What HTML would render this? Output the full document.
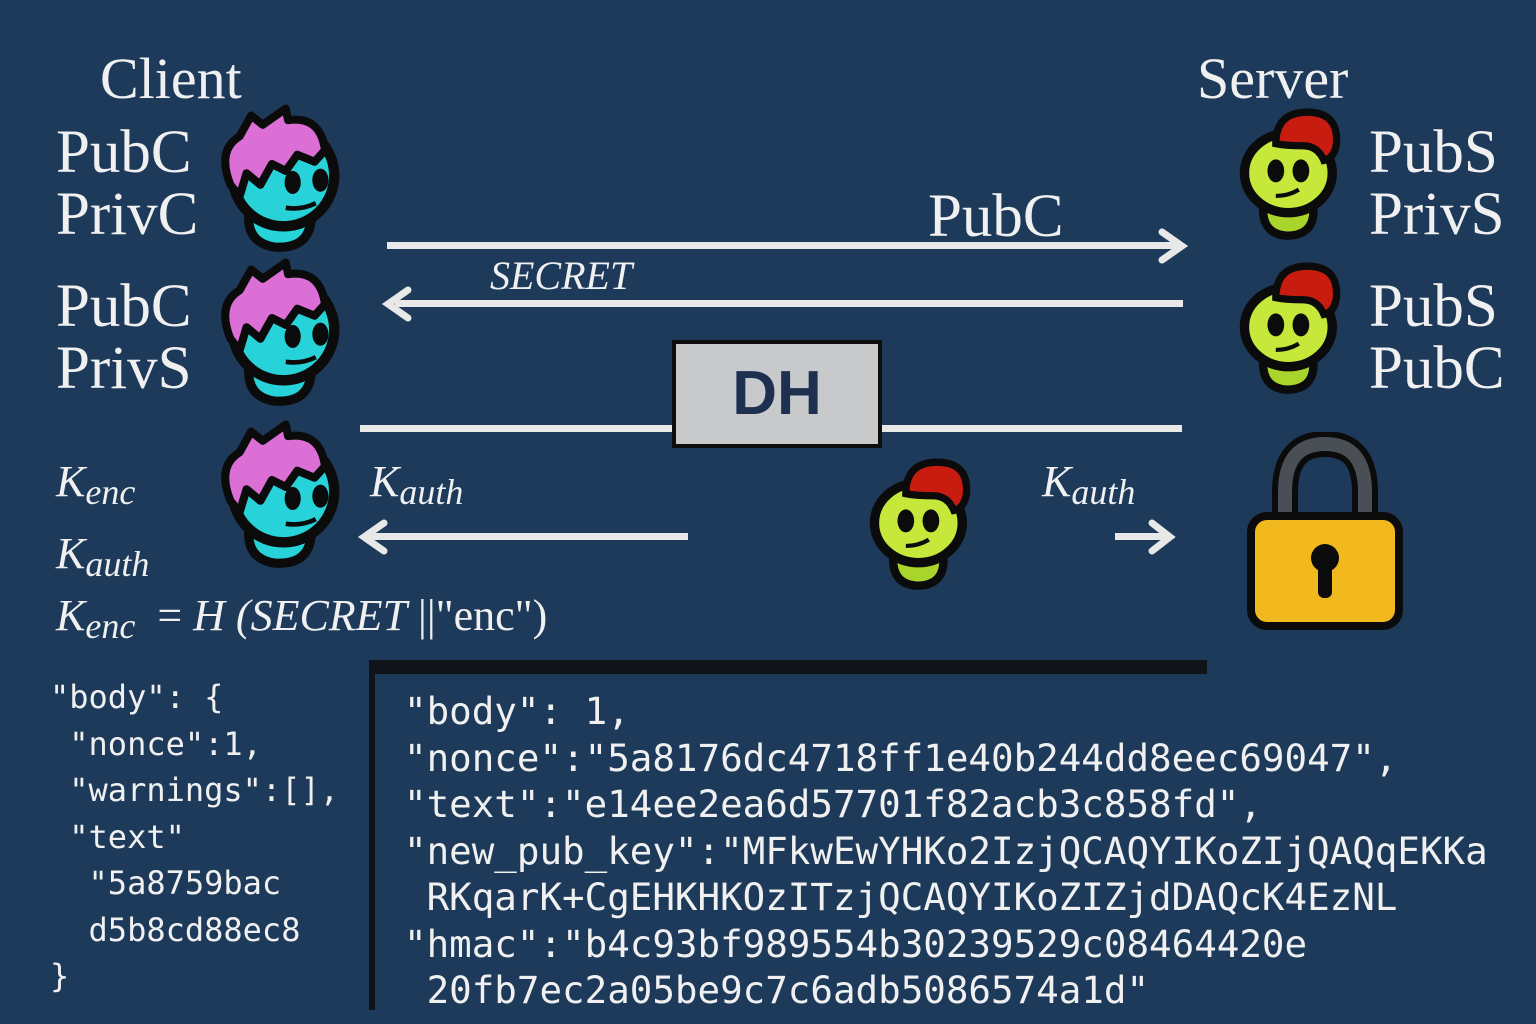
<!DOCTYPE html>
<html><head><meta charset="utf-8"><style>
body{margin:0;width:1536px;height:1024px;overflow:hidden;background:#1d3a5b;position:relative;font-family:"Liberation Serif",serif;color:#f0f0f0}
.t{position:absolute;white-space:nowrap;line-height:1}
.s{font-size:61px}
.m{font-family:"DejaVu Sans Mono","Liberation Mono",monospace}
.ar{position:absolute;height:7px;background:#e8e8e8}
.sub{font-size:36px;position:relative;top:8px}
</style></head><body>
<svg width="0" height="0" style="position:absolute">
<defs>
<g id="cl">
<path d="M38 95 Q36 120 60 124 Q90 126 92 100 Q88 84 65 84 Q40 84 38 95Z" fill="#27d3d8" stroke="#0b0b0b" stroke-width="8"/>
<circle cx="68" cy="62" r="44" fill="#27d3d8" stroke="#0b0b0b" stroke-width="9"/>
<path d="M22 70 Q10 40 30 28 L40 10 L50 18 L70 4 L72 14 Q100 10 104 40 L95 50 L80 44 L70 58 L58 52 L48 70 L36 60 L30 80Z" fill="#dc6fd6" stroke="#0b0b0b" stroke-width="7" stroke-linejoin="round"/>
<ellipse cx="76" cy="68" rx="7" ry="10" fill="#0b0b0b"/><ellipse cx="100" cy="66" rx="7" ry="10" fill="#0b0b0b"/>
<path d="M70 90 Q84 92 96 86" stroke="#0b0b0b" stroke-width="4" fill="none"/>
</g>
<g id="sv">
<path d="M28 95 Q26 122 50 124 Q76 124 76 100 Q74 86 52 86 Q30 86 28 95Z" fill="#a8d42c" stroke="#0b0b0b" stroke-width="8"/>
<ellipse cx="52" cy="64" rx="42" ry="38" fill="#c6e83a" stroke="#0b0b0b" stroke-width="9"/>
<path d="M40 36 Q40 4 74 6 Q100 8 98 36 Q96 50 86 52 Q80 38 66 38 Q50 38 40 36Z" fill="#c91c10" stroke="#0b0b0b" stroke-width="7"/>
<ellipse cx="40" cy="62" rx="8" ry="11" fill="#0b0b0b"/><ellipse cx="64" cy="62" rx="8" ry="11" fill="#0b0b0b"/>
<path d="M40 86 Q52 86 62 80" stroke="#0b0b0b" stroke-width="4" fill="none"/>
</g>
</defs></svg>

<div class="t" style="left:100px;top:50px;font-size:58px">Client</div>
<div class="t" style="left:1197px;top:50px;font-size:58px">Server</div>
<div class="t s" style="left:56px;top:122px">PubC</div>
<div class="t s" style="left:56px;top:184px">PrivC</div>
<div class="t s" style="left:56px;top:276px">PubC</div>
<div class="t s" style="left:56px;top:338px">PrivS</div>
<div class="t s" style="left:1369px;top:122px">PubS</div>
<div class="t s" style="left:1369px;top:184px">PrivS</div>
<div class="t s" style="left:1369px;top:276px">PubS</div>
<div class="t s" style="left:1369px;top:338px">PubC</div>

<svg style="position:absolute;left:205px;top:104px" width="150" height="150" viewBox="0 0 130 130"><use href="#cl"/></svg>
<svg style="position:absolute;left:205px;top:258px" width="150" height="150" viewBox="0 0 130 130"><use href="#cl"/></svg>
<svg style="position:absolute;left:205px;top:420px" width="150" height="150" viewBox="0 0 130 130"><use href="#cl"/></svg>
<svg style="position:absolute;left:1234px;top:106px" width="115" height="136" viewBox="0 0 110 130"><use href="#sv"/></svg>
<svg style="position:absolute;left:1234px;top:260px" width="115" height="136" viewBox="0 0 110 130"><use href="#sv"/></svg>
<svg style="position:absolute;left:864px;top:456px" width="115" height="136" viewBox="0 0 110 130"><use href="#sv"/></svg>

<div class="t s" style="left:928px;top:186px">PubC</div>
<div class="ar" style="left:387px;top:242px;width:790px"></div>
<svg style="position:absolute;left:1150px;top:226px" width="40" height="40"><path d="M12 6 L32 20 L12 34" stroke="#e8e8e8" stroke-width="7" fill="none" stroke-linecap="round"/></svg>
<div class="t" style="left:490px;top:256px;font-size:40px;font-style:italic">SECRET</div>
<div class="ar" style="left:395px;top:300px;width:788px"></div>
<svg style="position:absolute;left:380px;top:284px" width="40" height="40"><path d="M28 6 L8 20 L28 34" stroke="#e8e8e8" stroke-width="7" fill="none" stroke-linecap="round"/></svg>

<div class="ar" style="left:360px;top:425px;width:822px"></div>
<div style="position:absolute;left:672px;top:340px;width:210px;height:108px;background:#c8c9cb;border:4px solid #0d0d0d;box-sizing:border-box;text-align:center;font:bold 62px 'Liberation Sans',sans-serif;color:#1d3050;line-height:100px">DH</div>

<div class="t" style="left:370px;top:460px;font-size:44px;font-style:italic">K<span class="sub">auth</span></div>
<div class="ar" style="left:370px;top:533px;width:318px"></div>
<svg style="position:absolute;left:356px;top:517px" width="40" height="40"><path d="M28 6 L8 20 L28 34" stroke="#e8e8e8" stroke-width="7" fill="none" stroke-linecap="round"/></svg>
<div class="t" style="left:1042px;top:460px;font-size:44px;font-style:italic">K<span class="sub">auth</span></div>
<div class="ar" style="left:1115px;top:533px;width:52px"></div>
<svg style="position:absolute;left:1140px;top:517px" width="40" height="40"><path d="M12 6 L30 20 L12 34" stroke="#e8e8e8" stroke-width="7" fill="none" stroke-linecap="round"/></svg>

<svg style="position:absolute;left:1245px;top:432px" width="160" height="200">
<path d="M40 92 V60 Q40 12 80 12 Q120 12 120 60 V92" fill="none" stroke="#0b0b0b" stroke-width="26"/>
<path d="M40 92 V60 Q40 12 80 12 Q120 12 120 60 V92" fill="none" stroke="#4a4f55" stroke-width="14"/>
<rect x="6" y="84" width="148" height="110" rx="16" fill="#f2b91e" stroke="#0b0b0b" stroke-width="8"/>
<circle cx="80" cy="126" r="14" fill="#0b0b0b"/><rect x="73" y="126" width="14" height="40" rx="6" fill="#0b0b0b"/>
</svg>

<div class="t" style="left:56px;top:460px;font-size:44px;font-style:italic">K<span class="sub">enc</span></div>
<div class="t" style="left:56px;top:532px;font-size:44px;font-style:italic">K<span class="sub">auth</span></div>
<div class="t" style="left:56px;top:594px;font-size:44px;font-style:italic">K<span class="sub">enc</span> <span style="font-style:normal">&nbsp;=&nbsp;</span>H (SECRET<span style="font-style:normal"> ||"enc")</span></div>

<div class="t m" style="left:50px;top:674px;font-size:32px;line-height:46.5px;white-space:pre">"body": {
 "nonce":1,
 "warnings":[],
 "text"
  "5a8759bac
  d5b8cd88ec8
}</div>

<div style="position:absolute;left:369px;top:660px;width:838px;height:350px;border-top:14px solid #101418;border-left:6px solid #101418;box-sizing:border-box"></div>
<div class="t m" style="left:404px;top:688px;font-size:37.5px;line-height:46.5px;white-space:pre">"body": 1,
"nonce":"5a8176dc4718ff1e40b244dd8eec69047",
"text":"e14ee2ea6d57701f82acb3c858fd",
"new_pub_key":"MFkwEwYHKo2IzjQCAQYIKoZIjQAQqEKKa
 RKqarK+CgEHKHKOzITzjQCAQYIKoZIZjdDAQcK4EzNL
"hmac":"b4c93bf989554b30239529c08464420e
 20fb7ec2a05be9c7c6adb5086574a1d"</div>
</body></html>
